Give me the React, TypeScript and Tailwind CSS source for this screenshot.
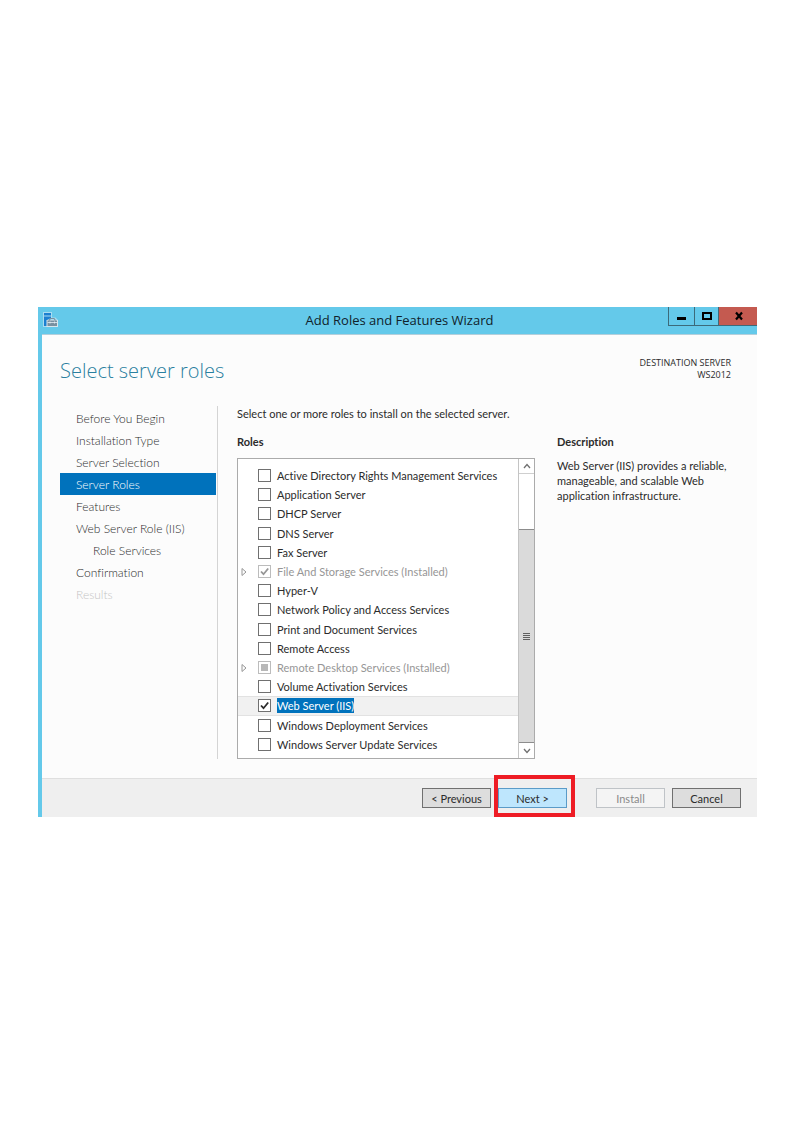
import { useState } from "react";

type Role = { name: string; state?: "checked" | "partial"; installed?: boolean };

const STEPS = [
	{ name: "Before You Begin" },
	{ name: "Installation Type" },
	{ name: "Server Selection" },
	{ name: "Server Roles" },
	{ name: "Features" },
	{ name: "Web Server Role (IIS)" },
	{ name: "Role Services", nested: true },
	{ name: "Confirmation" },
	{ name: "Results", disabled: true },
];

const ROLES: Role[] = [
	{ name: "Active Directory Rights Management Services" },
	{ name: "Application Server" },
	{ name: "DHCP Server" },
	{ name: "DNS Server" },
	{ name: "Fax Server" },
	{ name: "File And Storage Services (Installed)", state: "checked", installed: true },
	{ name: "Hyper-V" },
	{ name: "Network Policy and Access Services" },
	{ name: "Print and Document Services" },
	{ name: "Remote Access" },
	{ name: "Remote Desktop Services (Installed)", state: "partial", installed: true },
	{ name: "Volume Activation Services" },
	{ name: "Web Server (IIS)", state: "checked" },
	{ name: "Windows Deployment Services" },
	{ name: "Windows Server Update Services" },
];

function WizardIcon() {
	return (
		<svg viewBox="0 0 17 16" className="w-[17px] h-4" aria-hidden="true">
			<path d="M1 0h9v5.500h3.500L16 8v7H1z" fill="#a9dcf1" />
			<path d="M2 1h7v2.500H2z" fill="#1b7fd0" />
			<path d="M2 4.500h7v1.500L5 8v6H2z" fill="#1b7fd0" />
			<path d="M4.500 8H16v7H4.500z" fill="#d8e6ec" />
			<path d="M7 8.500 8.500 6.500H12L13.500 8.500" fill="none" stroke="#7890a0" strokeWidth="1.200" />
			<path d="M5.500 8.500H15V14H5.500z" fill="#7890a0" />
			<path d="M5.500 10.500H15M8 9.500v2M12.500 9.500v2" stroke="#e4eef3" fill="none" strokeWidth=".8" />
		</svg>
	);
}

function RoleRow(props: { role: Role; selected: boolean; onSelect: () => void }) {
	const { role, selected } = props;
	const [checked, setChecked] = useState(role.state === "checked");

	return (
		<li className={`flex items-center border-y pl-[3px] ${selected ? "bg-[#f1f1f1] border-[#e2e2e2]" : "border-transparent"}`}>
			<div className="w-[17px] shrink-0">
				{role.installed && (
					<button type="button" aria-label={`Expand ${role.name}`} className="block">
						<svg viewBox="0 0 6 10" className="w-[6px] h-[10px]">
							<path d="M1 1.500 5 5 1 8.500z" fill="#fff" stroke="#969696" />
						</svg>
					</button>
				)}
			</div>
			<label className={`flex items-center gap-[6px] whitespace-nowrap ${role.installed ? "text-[#969696]" : "text-[#2b2b2b]"}`}>
				<span className="grid place-items-center">
					<input
						type="checkbox"
						checked={checked}
						disabled={role.installed}
						onChange={(e) => {
							setChecked(e.target.checked);
							props.onSelect();
						}}
						className={`col-start-1 row-start-1 appearance-none w-[13px] h-[13px] border bg-white ${role.installed ? "border-[#bcbcbc]" : "border-[#707070]"}`}
					/>
					{checked && (
						<svg viewBox="0 0 13 13" className="col-start-1 row-start-1 w-[13px] h-[13px] pointer-events-none" aria-hidden="true">
							<path d="M3 6.500 5.500 9.200 10.200 3.500" fill="none" stroke="currentColor" strokeWidth="1.800" />
						</svg>
					)}
					{role.state === "partial" && <span className="col-start-1 row-start-1 w-[7px] h-[7px] bg-[#b8b8b8] pointer-events-none" />}
				</span>
				<span className={selected ? "bg-[#0072bc] text-white leading-[15px]" : "leading-[15px]"}>{role.name}</span>
			</label>
		</li>
	);
}

function ScrollBar() {
	return (
		<div className="w-4 shrink-0 flex flex-col border-l border-[#c4c4c4] bg-white">
			<button type="button" aria-label="Scroll up" className="h-[15px] grid place-items-center border-b border-[#cfcfcf]">
				<svg viewBox="0 0 8 6" className="w-2 h-[6px]">
					<path d="M1 5 4 1.500 7 5" fill="none" stroke="#707070" strokeWidth="1.300" />
				</svg>
			</button>
			<div className="h-[55px]" />
			<div className="grow border-y border-[#8c8c8c] bg-[#dadada] grid place-items-center">
				<svg viewBox="0 0 7 7" className="w-[7px] h-[7px]" aria-hidden="true">
					<path d="M0 .5h7M0 2.500h7M0 4.500h7M0 6.500h7" stroke="#606060" />
				</svg>
			</div>
			<button type="button" aria-label="Scroll down" className="h-[15px] grid place-items-center">
				<svg viewBox="0 0 8 6" className="w-2 h-[6px]">
					<path d="M1 1 4 4.500 7 1" fill="none" stroke="#707070" strokeWidth="1.300" />
				</svg>
			</button>
		</div>
	);
}

export default function App() {
	const [step, setStep] = useState("Server Roles");
	const [selected, setSelected] = useState("Web Server (IIS)");

	return (
		<div className="bg-white min-h-screen pt-[307px] pl-[38px] pr-[37px] font-[Lato,sans-serif] [font-variant-ligatures:none] text-[11px] leading-[15px] text-[#2b2b2b]">
			<main className="bg-[#64c9ea] pl-1">
				{/* Title bar */}
				<header className="h-[27px] grid grid-cols-[1fr_auto_1fr] items-start">
					<div className="pt-[5px]">
						<WizardIcon />
					</div>
					<div className="pt-[3px] font-['Open_Sans',sans-serif] text-[13px] leading-[20px] text-[#10222a]">Add Roles and Features Wizard</div>
					<div className="flex justify-end">
						<div className="flex h-[19px] border-l border-b border-[#3c6a7a] text-black">
							<button type="button" aria-label="Minimize" className="w-[26px] grid place-items-center border-r border-[#3c6a7a]">
								<svg viewBox="0 0 10 10" className="w-[10px] h-[10px]">
									<path d="M0 6h9v3H0z" />
								</svg>
							</button>
							<button type="button" aria-label="Maximize" className="w-6 grid place-items-center border-r border-[#3c6a7a]">
								<svg viewBox="0 0 10 10" className="w-[10px] h-[10px]">
									<path d="M1 2h8v6H1z" fill="none" stroke="#000" strokeWidth="2" />
								</svg>
							</button>
							<button type="button" aria-label="Close" className="w-[38px] grid place-items-center bg-[#c45a50]">
								<svg viewBox="0 0 10 10" className="w-[10px] h-[10px]">
									<path d="M3 1.500 9 8.500M9 1.500 3 8.500" stroke="#000" strokeWidth="2.200" />
								</svg>
							</button>
						</div>
					</div>
				</header>

				<div className="bg-[#fcfcfc] border-t border-[#b4cfdb]">
					{/* Heading */}
					<div className="flex justify-between pl-[18px] pr-[26px] pt-[22px] h-[71px] font-['Open_Sans',sans-serif]">
						<h1 className="text-[20px] leading-[28px] font-light text-[#2a7f9f]">Select server roles</h1>
						<div className="text-right text-[9px] leading-[12px]">
							DESTINATION SERVER
							<br />
							WS2012
						</div>
					</div>

					<div className="flex pl-[18px] pr-5 pb-[19px]">
						{/* Wizard steps */}
						<nav className="w-[158px] shrink-0 border-r border-[#d4d4d4] pr-px pt-px">
							{STEPS.map((item) => (
								<button
									key={item.name}
									type="button"
									disabled={item.disabled}
									onClick={() => setStep(item.name)}
									className={`block w-full h-[22px] text-left text-[12px] font-light ${item.nested ? "pl-[33px]" : "pl-4"} ${
										item.disabled ? "text-[#c4c4c4]" : item.name === step ? "bg-[#0072bc] text-white" : "text-[#2b2b2b]"
									}`}
								>
									{item.name}
								</button>
							))}
						</nav>

						{/* Role list */}
						<section className="grow pl-[19px]">
							<p>Select one or more roles to install on the selected server.</p>
							<h2 className="font-bold pt-[13px]">Roles</h2>
							<div className="mt-[9px] h-[301px] flex border border-[#ababab] bg-white">
								<ul className="grow pt-[7px] pb-1 grid auto-rows-fr">
									{ROLES.map((role) => (
										<RoleRow key={role.name} role={role} selected={role.name === selected} onSelect={() => setSelected(role.name)} />
									))}
								</ul>
								<ScrollBar />
							</div>
						</section>

						<aside className="w-[202px] shrink-0 pl-[22px] pt-7">
							<h2 className="font-bold">Description</h2>
							<p className="pt-[9px]">Web Server (IIS) provides a reliable, manageable, and scalable Web application infrastructure.</p>
						</aside>
					</div>

					{/* Buttons */}
					<footer className="h-[39px] flex items-center justify-end gap-[7px] pr-4 bg-[#efefef] border-t border-[#dfdfdf]">
						<button type="button" className="w-[69px] h-5 border border-[#707070] bg-[#dddddd]">
							&lt; Previous
						</button>
						<div className="relative">
							<button type="button" className="w-[69px] h-5 border border-[#5a9bc8] bg-[#bee6fd] block">
								Next &gt;
							</button>
							<div className="absolute -left-1 -right-[8px] -top-[13px] -bottom-[9px] border-4 border-[#ee1c25] pointer-events-none" />
						</div>
						<button type="button" disabled className="ml-[22px] w-[69px] h-5 border border-[#bfc3c7] bg-[#f4f4f4] text-[#8a8a8a]">
							Install
						</button>
						<button type="button" className="w-[69px] h-5 border border-[#707070] bg-[#dddddd]">
							Cancel
						</button>
					</footer>
				</div>
			</main>
		</div>
	);
}
